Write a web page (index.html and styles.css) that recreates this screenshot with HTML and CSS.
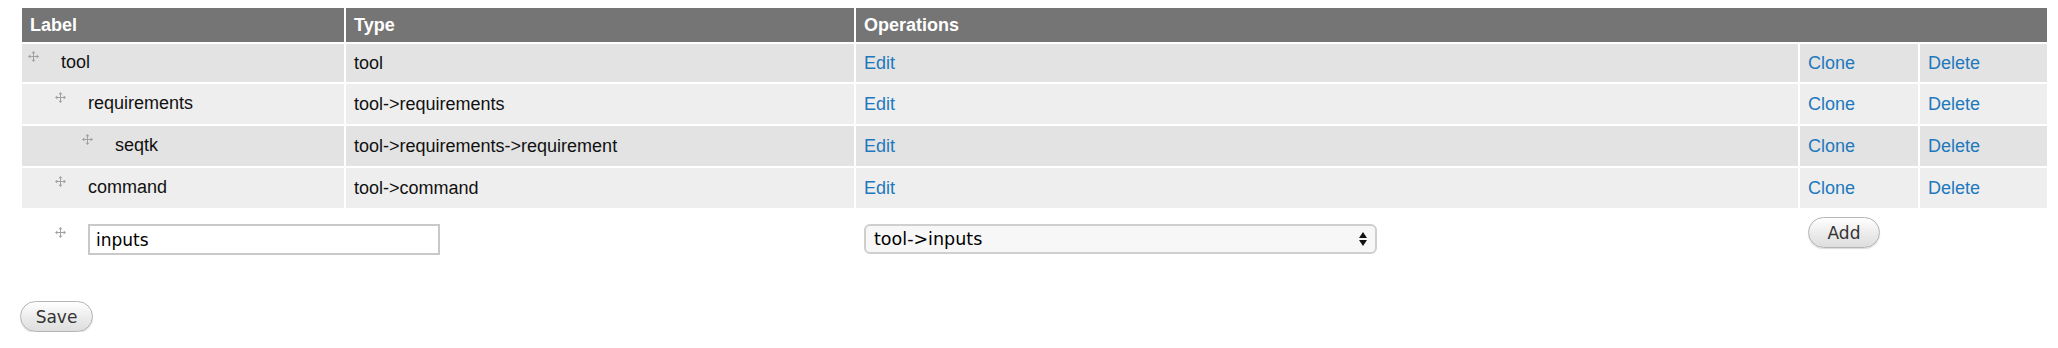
FILE: index.html
```html
<!DOCTYPE html>
<html lang="en">
<head>
    <meta charset="UTF-8">
    <title>Tool structure</title>
    <link rel="stylesheet" href="styles.css">
</head>
<body>
    <form class="page">
        <table class="tree">
            <colgroup>
                <col class="c-label">
                <col class="c-type">
                <col class="c-edit">
                <col class="c-clone">
                <col class="c-delete">
            </colgroup>
            <thead>
                <tr>
                    <th>Label</th>
                    <th>Type</th>
                    <th colspan="3">Operations</th>
                </tr>
            </thead>
            <tbody>
                <tr class="odd first">
                    <td class="label">
                        <div class="item depth-0">
                            <span class="handle"><svg viewBox="0 0 11 11" width="11" height="11"><path d="M5.5 1.5v8M1.5 5.5h8"/><polygon points="5.5,0 3.6,2.3 7.4,2.3"/><polygon points="5.5,11 3.6,8.7 7.4,8.7"/><polygon points="0,5.5 2.3,3.6 2.3,7.4"/><polygon points="11,5.5 8.7,3.6 8.7,7.4"/></svg></span>
                            <span>tool</span>
                        </div>
                    </td>
                    <td>tool</td>
                    <td><a href="#">Edit</a></td>
                    <td><a href="#">Clone</a></td>
                    <td><a href="#">Delete</a></td>
                </tr>
                <tr class="even">
                    <td class="label">
                        <div class="item depth-1">
                            <span class="handle"><svg viewBox="0 0 11 11" width="11" height="11"><path d="M5.5 1.5v8M1.5 5.5h8"/><polygon points="5.5,0 3.6,2.3 7.4,2.3"/><polygon points="5.5,11 3.6,8.7 7.4,8.7"/><polygon points="0,5.5 2.3,3.6 2.3,7.4"/><polygon points="11,5.5 8.7,3.6 8.7,7.4"/></svg></span>
                            <span>requirements</span>
                        </div>
                    </td>
                    <td>tool-&gt;requirements</td>
                    <td><a href="#">Edit</a></td>
                    <td><a href="#">Clone</a></td>
                    <td><a href="#">Delete</a></td>
                </tr>
                <tr class="odd">
                    <td class="label">
                        <div class="item depth-2">
                            <span class="handle"><svg viewBox="0 0 11 11" width="11" height="11"><path d="M5.5 1.5v8M1.5 5.5h8"/><polygon points="5.5,0 3.6,2.3 7.4,2.3"/><polygon points="5.5,11 3.6,8.7 7.4,8.7"/><polygon points="0,5.5 2.3,3.6 2.3,7.4"/><polygon points="11,5.5 8.7,3.6 8.7,7.4"/></svg></span>
                            <span>seqtk</span>
                        </div>
                    </td>
                    <td>tool-&gt;requirements-&gt;requirement</td>
                    <td><a href="#">Edit</a></td>
                    <td><a href="#">Clone</a></td>
                    <td><a href="#">Delete</a></td>
                </tr>
                <tr class="even">
                    <td class="label">
                        <div class="item depth-1">
                            <span class="handle"><svg viewBox="0 0 11 11" width="11" height="11"><path d="M5.5 1.5v8M1.5 5.5h8"/><polygon points="5.5,0 3.6,2.3 7.4,2.3"/><polygon points="5.5,11 3.6,8.7 7.4,8.7"/><polygon points="0,5.5 2.3,3.6 2.3,7.4"/><polygon points="11,5.5 8.7,3.6 8.7,7.4"/></svg></span>
                            <span>command</span>
                        </div>
                    </td>
                    <td>tool-&gt;command</td>
                    <td><a href="#">Edit</a></td>
                    <td><a href="#">Clone</a></td>
                    <td><a href="#">Delete</a></td>
                </tr>
                <tr class="add-row">
                    <td class="label">
                        <div class="item depth-1">
                            <span class="handle"><svg viewBox="0 0 11 11" width="11" height="11"><path d="M5.5 1.5v8M1.5 5.5h8"/><polygon points="5.5,0 3.6,2.3 7.4,2.3"/><polygon points="5.5,11 3.6,8.7 7.4,8.7"/><polygon points="0,5.5 2.3,3.6 2.3,7.4"/><polygon points="11,5.5 8.7,3.6 8.7,7.4"/></svg></span>
                            <input type="text" class="text-input" value="inputs">
                        </div>
                    </td>
                    <td></td>
                    <td>
                        <span class="select-wrap">
                            <select class="select">
                                <option>tool-&gt;inputs</option>
                            </select>
                            <svg class="select-arrows" viewBox="0 0 8 14" width="8" height="14"><polygon points="4,0 0,6 8,6"/><polygon points="0,8 8,8 4,14"/></svg>
                        </span>
                    </td>
                    <td class="add-cell"><button type="button" class="button">Add</button></td>
                    <td></td>
                </tr>
            </tbody>
        </table>

        <div class="actions">
            <button type="button" class="button save">Save</button>
        </div>
    </form>
</body>
</html>
```

FILE: styles.css
```css
:root {
    --header-bg: #757575;
    --row-odd: #e3e3e3;
    --row-even: #eeeeee;
    --link-color: #1e78bd;
    --text-color: #111111;
}
body {
    margin: 0;
    padding: 0;
    background: #ffffff;
    color: var(--text-color);
    font-family: "Liberation Sans", Arial, sans-serif;
    font-size: 18px;
}
.page {
    padding: 6px 0 0 20px;
}
.tree {
    table-layout: fixed;
    width: 2029px;
    border-collapse: separate;
    border-spacing: 2px;
}
.c-label { width: 322px; }
.c-type { width: 508px; }
.c-edit { width: 942px; }
.c-clone { width: 118px; }
.c-delete { width: 127px; }
.tree th {
    background-color: var(--header-bg);
    color: #ffffff;
    font-weight: bold;
    text-align: left;
    height: 34px;
    padding: 0 8px;
    box-sizing: border-box;
    line-height: 20px;
}
.tree td {
    padding: 0 8px;
    line-height: 20px;
    vertical-align: middle;
    box-sizing: border-box;
}
.tree tr.odd td {
    background-color: var(--row-odd);
    height: 40px;
}
.tree tr.even td {
    background-color: var(--row-even);
    height: 40px;
}
.tree tr.first td {
    height: 38px;
}
.tree a {
    color: var(--link-color);
    text-decoration: none;
}
.tree td.label {
    padding-left: 6px;
    overflow: visible;
}
.item {
    display: flex;
    align-items: center;
    margin-top: -2px;
}
.depth-1 { padding-left: 27px; }
.depth-2 { padding-left: 54px; }
.handle {
    align-self: flex-start;
    width: 11px;
    height: 11px;
    margin: -1px 22px 0 0;
    flex: none;
}
.handle svg {
    display: block;
}
.handle path {
    stroke: #a0a0a0;
    stroke-width: 1;
    fill: none;
}
.handle polygon {
    fill: #a0a0a0;
}
.tree tr.add-row td {
    vertical-align: top;
    padding-top: 14px;
    padding-bottom: 14px;
}
.add-row .item {
    margin-top: 0;
}
.add-row .handle {
    margin-top: 3px;
}
.tree tr.add-row td.add-cell {
    padding-top: 7px;
}
.text-input {
    flex: none;
    width: 352px;
    height: 31px;
    box-sizing: border-box;
    border: 2px solid #c9c9c9;
    padding: 0 6px;
    margin: 0;
    font-family: "DejaVu Sans", Verdana, sans-serif;
    font-size: 17px;
    color: #000000;
    background: #ffffff;
    outline: none;
}
.select-wrap {
    position: relative;
    display: inline-block;
}
.select {
    display: block;
    width: 513px;
    height: 30px;
    box-sizing: border-box;
    border: 2px solid #cfcfcf;
    border-radius: 6px;
    padding: 0 30px 0 8px;
    margin: 0;
    background: #f7f7f7;
    appearance: none;
    -webkit-appearance: none;
    font-family: "DejaVu Sans", Verdana, sans-serif;
    font-size: 17.5px;
    color: #000000;
}
.select-arrows {
    position: absolute;
    right: 10px;
    top: 8px;
    pointer-events: none;
}
.select-arrows polygon {
    fill: #111111;
}
.button {
    height: 31px;
    box-sizing: border-box;
    padding: 0 17px;
    border: 1px solid #b4b4b4;
    border-radius: 16px;
    background: linear-gradient(#ffffff, #e9e9e9 60%, #dedede);
    box-shadow: 0 1px 1px rgba(0, 0, 0, 0.15);
    font-family: "DejaVu Sans", Verdana, sans-serif;
    font-size: 17px;
    color: #333333;
    cursor: pointer;
}
.save {
    width: 73px;
    padding: 0;
}
.add-cell .button {
    width: 72px;
    padding: 0;
}
.actions {
    margin-top: 30px;
}
```
